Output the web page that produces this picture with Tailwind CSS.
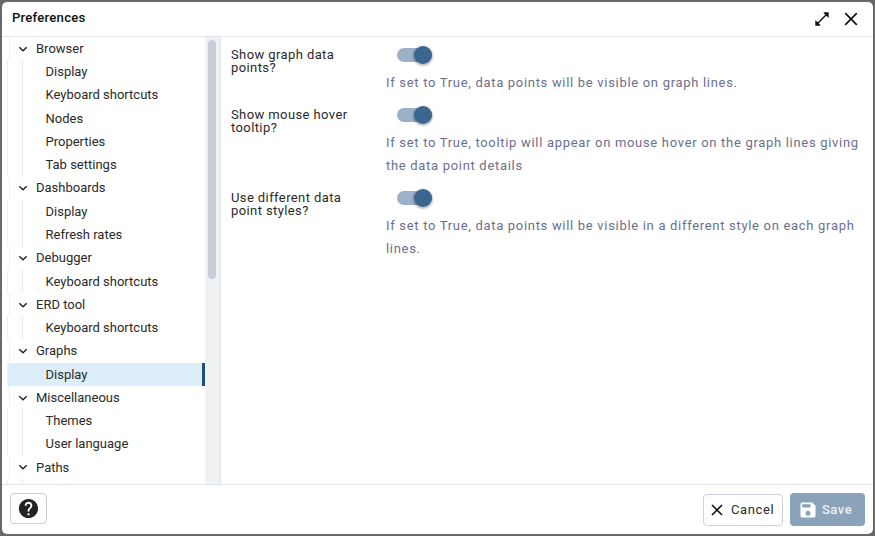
<!DOCTYPE html>
<html lang="en">
<head>
<meta charset="utf-8">
<title>Preferences</title>
<script src="https://cdn.jsdelivr.net/npm/@tailwindcss/browser@4"></script>
</head>
<body class="h-[536px] w-[875px] overflow-hidden bg-[#69696b] pt-[2px] pr-[2px] pb-[2px] pl-[2px] font-[Roboto,sans-serif] text-[13px] text-[#2a2a2a]">
<svg class="hidden">
  <symbol id="chev" viewBox="0 0 10 8"><path d="M1.3 2.2 5 5.8 8.7 2.2" fill="none" stroke="#222" stroke-width="1.4"/></symbol>
</svg>
<div class="flex h-[532px] w-[871px] flex-col overflow-hidden rounded-[5px] bg-white">
  <header class="flex h-[35px] shrink-0 items-center border-b border-[#e2e4ee] pr-[15px] pl-[10px]">
    <h1 class="-mt-[2px] flex-1 text-[13.2px] font-medium tracking-[0.2px] text-[#111]">Preferences</h1>
    <svg class="mr-[14px] size-[16px]" viewBox="0 0 16 16" fill="#111"><path d="M3 13 13 3" stroke="#111" stroke-width="1.5"/><path d="M9.3 1.3h5.4v5.4l-1.6-1.2-2.6-2.6zM1.3 9.3v5.4h5.4l-1.2-1.6-2.6-2.6z"/></svg>
    <svg class="size-[14px]" viewBox="0 0 14 14" fill="none" stroke="#111" stroke-width="1.7"><path d="M1.2 1.2 12.8 12.8M12.8 1.2 1.2 12.8"/></svg>
  </header>
  <main class="flex min-h-0 flex-1">
    <nav id="tree" class="w-[203px] shrink-0 overflow-hidden pl-[5px]"></nav>
    <div class="w-[14px] shrink-0 bg-[#f0f1f3] px-[3px] pt-[3px]"><div class="h-[239px] w-[8px] rounded-full bg-[#c9cdd8]"></div></div>
    <section class="flex-1 border-l-2 border-[#e6e8f0] pt-[6px] pl-[10px]">
      <div class="flex h-[60px]">
        <div class="w-[155px] shrink-0 pt-[5px] leading-[13px] tracking-[0.4px]">Show graph data<br>points?</div>
        <div class="tracking-[0.69px] text-[#6b708c]">
          <div class="ml-[11px] flex h-[23px] items-center"><div class="flex h-[14px] w-[35px] items-center justify-end rounded-full bg-[#9cb0c8]"><div class="size-[18px] rounded-full bg-[#3b668f] shadow-[0_1px_2px_1px_rgba(0,0,0,0.25)]"></div></div></div>
          <p class="mt-[5px] leading-[23px]">If set to True, data points will be visible on graph lines.</p>
        </div>
      </div>
      <div class="flex h-[83px]">
        <div class="w-[155px] shrink-0 pt-[5px] leading-[13px] tracking-[0.4px]">Show mouse hover<br>tooltip?</div>
        <div class="tracking-[0.69px] text-[#6b708c]">
          <div class="ml-[11px] flex h-[23px] items-center"><div class="flex h-[14px] w-[35px] items-center justify-end rounded-full bg-[#9cb0c8]"><div class="size-[18px] rounded-full bg-[#3b668f] shadow-[0_1px_2px_1px_rgba(0,0,0,0.25)]"></div></div></div>
          <p class="mt-[5px] leading-[23px] whitespace-nowrap">If set to True, tooltip will appear on mouse hover on the graph lines giving<br>the data point details</p>
        </div>
      </div>
      <div class="flex h-[83px]">
        <div class="w-[155px] shrink-0 pt-[5px] leading-[13px] tracking-[0.4px]">Use different data<br>point styles?</div>
        <div class="tracking-[0.69px] text-[#6b708c]">
          <div class="ml-[11px] flex h-[23px] items-center"><div class="flex h-[14px] w-[35px] items-center justify-end rounded-full bg-[#9cb0c8]"><div class="size-[18px] rounded-full bg-[#3b668f] shadow-[0_1px_2px_1px_rgba(0,0,0,0.25)]"></div></div></div>
          <p class="mt-[5px] leading-[23px] whitespace-nowrap">If set to True, data points will be visible in a different style on each graph<br>lines.</p>
        </div>
      </div>
    </section>
  </main>
  <footer class="flex h-[50px] shrink-0 items-start border-t border-[#dfe2ec] pt-[8px] pr-[8px] pl-[8px]">
    <button class="flex h-[31px] w-[37px] items-center justify-center rounded-[4px] border border-[#c9cddd]">
      <svg class="size-[23px]" viewBox="0 0 24 24" fill="#222"><path d="M12 2C6.48 2 2 6.48 2 12s4.48 10 10 10 10-4.48 10-10S17.52 2 12 2zm1 17h-2v-2h2v2zm2.07-7.75-.9.92C13.45 12.9 13 13.5 13 15h-2v-.5c0-1.1.45-2.1 1.17-2.83l1.24-1.26c.37-.36.59-.86.59-1.41 0-1.1-.9-2-2-2s-2 .9-2 2H8c0-2.21 1.79-4 4-4s4 1.79 4 4c0 .88-.36 1.68-.93 2.25z"/></svg>
    </button>
    <div class="flex-1"></div>
    <button class="mt-[1px] flex h-[32px] w-[80px] items-center rounded-[4px] border border-[#cdd1df] pl-[7px] tracking-[0.6px]">
      <svg class="mr-[8px] size-[12px]" viewBox="0 0 12 12" fill="none" stroke="#111" stroke-width="1.6"><path d="M1 1 11 11M11 1 1 11"/></svg>Cancel
    </button>
    <button class="ml-[7px] flex h-[33px] w-[75px] items-center rounded-[4px] bg-[#8ba2bb] pl-[8px] font-medium tracking-[0.5px] text-[#eaf0f5]">
      <svg class="mr-[4px] size-[20px]" viewBox="0 0 24 24" fill="#fff"><path d="M17 3H5a2 2 0 0 0-2 2v14a2 2 0 0 0 2 2h14a2 2 0 0 0 2-2V7l-4-4zm-5 16a3 3 0 1 1 0-6 3 3 0 0 1 0 6zm3-10H5V5h10v4z"/></svg>Save
    </button>
  </footer>
</div>
<script>
const groups = [
  ['Browser', ['Display', 'Keyboard shortcuts', 'Nodes', 'Properties', 'Tab settings']],
  ['Dashboards', ['Display', 'Refresh rates']],
  ['Debugger', ['Keyboard shortcuts']],
  ['ERD tool', ['Keyboard shortcuts']],
  ['Graphs', ['Display']],
  ['Miscellaneous', ['Themes', 'User language']],
  ['Paths', ['']]
];
document.getElementById('tree').innerHTML = groups.map(([name, items]) =>
  `<div class="flex h-[23.27px] items-center"><i class="ml-[2px] h-full w-px bg-[#eeeff2]"></i><svg class="ml-[8px] h-[8px] w-[10px]"><use href="#chev"/></svg><span class="ml-[8px]">${name}</span></div>` +
  items.map(t => `<div class="flex h-[23.27px] items-center ${name === 'Graphs' ? 'border-r-[3px] border-[#1f4f7d] bg-[#dceefa]' : ''}"><i class="h-full w-px bg-[#eeeff2]"></i><i class="ml-[14px] h-full w-px bg-[#e6e8ec]"></i><span class="ml-[22.5px]">${t}</span></div>`).join('')
).join('');
</script>
</body>
</html>
